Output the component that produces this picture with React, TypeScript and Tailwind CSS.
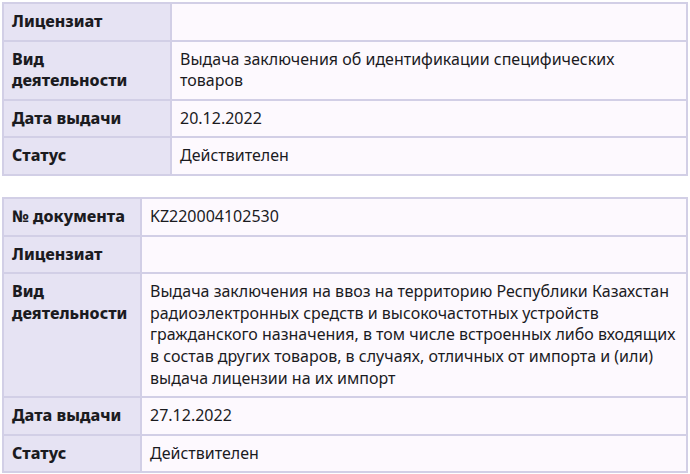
const first = [
  { label: 'Лицензиат', value: '' },
  { label: 'Вид деятельности', value: 'Выдача заключения об идентификации специфических товаров' },
  { label: 'Дата выдачи', value: '20.12.2022' },
  { label: 'Статус', value: 'Действителен' },
]

const second = [
  { label: '№ документа', value: 'KZ220004102530' },
  { label: 'Лицензиат', value: '' },
  {
    label: 'Вид деятельности',
    value:
      'Выдача заключения на ввоз на территорию Республики Казахстан радиоэлектронных средств и высокочастотных устройств гражданского назначения, в том числе встроенных либо входящих в состав других товаров, в случаях, отличных от импорта и (или) выдача лицензии на их импорт',
  },
  { label: 'Дата выдачи', value: '27.12.2022' },
  { label: 'Статус', value: 'Действителен' },
]

function InfoTable({ rows, labelWidth }: { rows: { label: string; value: string }[]; labelWidth: string }) {
  return (
    <table className="w-full table-fixed border-collapse border-2 border-[#d2cfe6]">
      <colgroup>
        <col className={labelWidth} />
        <col />
      </colgroup>
      <tbody>
        {rows.map((r, i) => (
          <tr key={i}>
            <th className="border-2 border-[#d2cfe6] bg-[#e6e3f3] px-2 py-[7px] text-left align-top font-extrabold text-[#1b1b1f]">
              {r.label}
            </th>
            <td className="border-2 border-[#d2cfe6] bg-[#fdf9fe] px-2 py-[7px] align-top text-[#1b1b1f]">
              {r.value}
            </td>
          </tr>
        ))}
      </tbody>
    </table>
  )
}

export default function App() {
  return (
    <div className="min-h-screen bg-white p-[2px] text-[16px] leading-[1.35] font-['Noto_Sans',sans-serif]">
      <InfoTable rows={first} labelWidth="w-[168px]" />
      <div className="h-[21px]" />
      <InfoTable rows={second} labelWidth="w-[138px]" />
    </div>
  )
}
